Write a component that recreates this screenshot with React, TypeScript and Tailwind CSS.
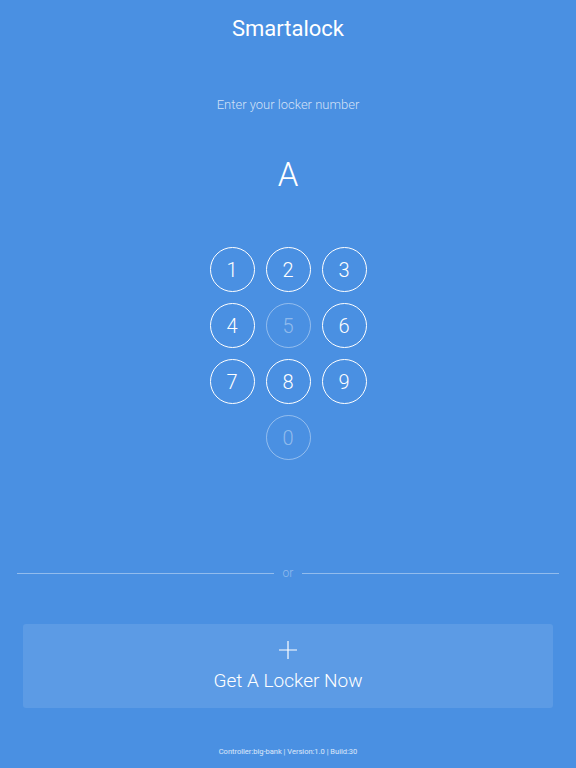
import React, { useState } from 'react';

const keys = ['1', '2', '3', '4', '5', '6', '7', '8', '9'];
const disabled = new Set(['5', '0']);

function Key({ label, onPress }: { label: string; onPress: (k: string) => void }) {
  const off = disabled.has(label);
  return (
    <button
      onClick={() => !off && onPress(label)}
      className={`w-[45px] h-[45px] rounded-full border-[1.5px] flex items-center justify-center text-[20px] font-light ${
        off ? 'border-white/40 text-white/40' : 'border-white text-white'
      }`}
    >
      {label}
    </button>
  );
}

export default function App() {
  const [value, setValue] = useState('A');

  const press = (k: string) => setValue((v) => (v + k).slice(0, 6));

  return (
    <div
      className="w-[576px] h-[768px] bg-[#4a90e2] text-white flex flex-col items-center"
      style={{ fontFamily: 'Roboto, "Liberation Sans", sans-serif' }}
    >
      <h1 className="mt-[15px] h-[28px] text-[22px] leading-[28px] font-normal">Smartalock</h1>

      <p className="mt-[52px] text-[13px] leading-[20px] font-light text-white/75">Enter your locker number</p>

      <div className="mt-[34px] h-[52px] text-[33px] leading-[52px] font-light">{value}</div>

      {/* keypad */}
      <div className="mt-[46px] grid grid-cols-3 gap-[11px]">
        {keys.map((k) => (
          <Key key={k} label={k} onPress={press} />
        ))}
        <div />
        <Key label="0" onPress={press} />
        <div />
      </div>

      <div className="mt-[105px] w-full px-[17px] flex items-center gap-[9px]">
        <div className="flex-1 h-px bg-white/40" />
        <span className="text-[12px] leading-[16px] font-light text-white/40">or</span>
        <div className="flex-1 h-px bg-white/40" />
      </div>

      <div className="mt-[43px] w-full px-[23px]">
        <button className="w-full h-[84px] rounded-[3px] bg-[#5c9be5] flex flex-col items-center justify-center">
          <svg width="18" height="18" viewBox="0 0 18 18" className="mt-[2px]">
            <path d="M9 0v18M0 9h18" stroke="white" strokeWidth="1.2" />
          </svg>
          <span className="mt-[9px] text-[19px] leading-[26px] font-light">Get A Locker Now</span>
        </button>
      </div>

      <div className="mt-[38px] text-[7.5px] leading-[12px] text-white/80">
        Controller:big-bank | Version:1.0 | Build:30
      </div>
    </div>
  );
}
